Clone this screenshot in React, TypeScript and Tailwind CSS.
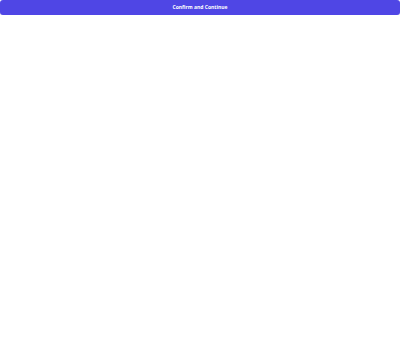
export default function App() {
  return (
    <div className="w-full font-['Open_Sans',sans-serif]">
      <button className="w-full h-[15px] rounded-[3px] bg-[#4f46e5] text-white text-[5px] font-bold shadow-md flex items-center justify-center font-['Open_Sans',sans-serif]">
        Confirm and Continue
      </button>
    </div>
  );
}
